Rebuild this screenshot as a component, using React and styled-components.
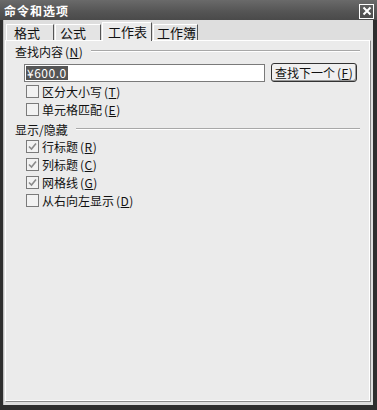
import React from 'react';
import styled, { createGlobalStyle } from 'styled-components';

const Global = createGlobalStyle`
  html, body {
    margin: 0;
    padding: 0;
    background: #2e2e2e;
  }
  body {
    font-family: "Noto Sans CJK SC", "DejaVu Sans", sans-serif;
  }
`;

const findOptions = [
  { label: '区分大小写', key: 'T', checked: false },
  { label: '单元格匹配', key: 'E', checked: false },
];

const viewOptions = [
  { label: '行标题', key: 'R', checked: true },
  { label: '列标题', key: 'C', checked: true },
  { label: '网格线', key: 'G', checked: true },
  { label: '从右向左显示', key: 'D', checked: false },
];

const tabs = [
  { name: '格式', width: 48, pad: 7 },
  { name: '公式', width: 46, pad: 4 },
  { name: '工作表', width: 50, pad: 5 },
  { name: '工作簿', width: 45, pad: 3 },
];

function Mnemonic({ k }) {
  return (
    <Key>
      (<u>{k}</u>)
    </Key>
  );
}

function Check({ label, k, checked }) {
  return (
    <CheckRow>
      <Box>
        {checked && (
          <svg width="9" height="9" viewBox="0 0 9 9">
            <path d="M1 4.5 L3.5 7 L8 1.5" stroke="#8a8a8a" strokeWidth="1.6" fill="none" />
          </svg>
        )}
      </Box>
      <span>{label}</span>
      <Mnemonic k={k} />
    </CheckRow>
  );
}

export default function App() {
  return (
    <>
      <Global />
      <Window>
        <TitleBar>
          <Title>命令和选项</Title>
          <CloseBtn>
            <svg width="10" height="10" viewBox="0 0 10 10">
              <path d="M1.5 1.5 L8.5 8.5 M8.5 1.5 L1.5 8.5" stroke="#fff" strokeWidth="2" />
            </svg>
          </CloseBtn>
        </TitleBar>
        <Body>
          <TabRow>
            {tabs.map((t, i) => (
              <Tab key={t.name} active={i === 2} w={t.width} pad={t.pad}>
                {t.name}
              </Tab>
            ))}
          </TabRow>
          <Panel>
            <GroupHead>
              <span>查找内容</span>
              <Mnemonic k="N" />
              <Rule />
            </GroupHead>
            <FindRow>
              <Input>
                <Selected>¥600.0</Selected>
              </Input>
              <Button>
                查找下一个<Mnemonic k="F" />
              </Button>
            </FindRow>
            {findOptions.map((o) => (
              <Check key={o.label} label={o.label} k={o.key} checked={o.checked} />
            ))}
            <GroupHead second>
              <span>显示/隐藏</span>
              <Rule />
            </GroupHead>
            {viewOptions.map((o) => (
              <Check key={o.label} label={o.label} k={o.key} checked={o.checked} />
            ))}
          </Panel>
        </Body>
      </Window>
    </>
  );
}

const Window = styled.div`
  width: 377px;
  height: 410px;
  box-sizing: border-box;
  background: #2e2e2e;
  padding: 0 4px 5px 3px;
  display: flex;
  flex-direction: column;
`;

const TitleBar = styled.div`
  height: 20px;
  margin: 0 -4px 0 -3px;
  padding: 0 3px 0 4px;
  display: flex;
  align-items: center;
  justify-content: space-between;
  background: linear-gradient(to bottom, #6a6a6a, #545454 60%, #4a4a4a);
`;

const Title = styled.span`
  color: #fff;
  font-size: 12px;
  font-weight: bold;
  letter-spacing: 1px;
`;

const CloseBtn = styled.div`
  width: 13px;
  height: 13px;
  border: 1px solid #fff;
  display: flex;
  align-items: center;
  justify-content: center;
  margin-top: 2px;
`;

const Body = styled.div`
  flex: 1;
  background: #dedede;
  display: flex;
  flex-direction: column;
  padding: 1px 2px 3px 1px;
  border-left: 1px solid #bdbdbd;
`;

const TabRow = styled.div`
  display: flex;
  align-items: flex-end;
  height: 19px;
  padding-left: 1px;
`;

const Tab = styled.div`
  box-sizing: border-box;
  width: ${(p) => p.w}px;
  height: ${(p) => (p.active ? '19px' : '16px')};
  padding-left: ${(p) => p.pad}px;
  background: ${(p) => (p.active ? '#ebebeb' : '#e4e4e4')};
  border-top: 1px solid #fff;
  border-left: 1px solid #fff;
  border-right: 1px solid #555;
  margin-right: 1px;
  font-size: 13px;
  line-height: ${(p) => (p.active ? '18px' : '15px')};
  color: #111;
  position: relative;
  z-index: ${(p) => (p.active ? 1 : 0)};
  margin-bottom: ${(p) => (p.active ? '-1px' : '0')};
`;

const Panel = styled.div`
  flex: 1;
  background: #ebebeb;
  border-top: 1px solid #fff;
  border-left: 1px solid #fff;
  border-right: 1px solid #8a8a8a;
  border-bottom: 1px solid #8a8a8a;
  box-shadow: inset -1px -1px 0 #fff;
  padding: 1px 10px 0 9px;
  display: flex;
  flex-direction: column;
  font-size: 12px;
  color: #111;
`;

const GroupHead = styled.div`
  display: flex;
  align-items: center;
  height: ${(p) => (p.second ? '16px' : '18px')};
  margin-top: ${(p) => (p.second ? '3px' : '0')};
  font-size: 12px;
`;

const Rule = styled.div`
  flex: 1;
  height: 0;
  border-top: 1px solid #a8a8a8;
  border-bottom: 1px solid #fff;
  margin-left: 8px;
`;

const Key = styled.span`
  font-size: 12px;
  margin-left: 2px;
  letter-spacing: 0.5px;
`;

const FindRow = styled.div`
  display: flex;
  align-items: center;
  gap: 6px;
  padding-left: 9px;
  margin: 3px 0 0;
`;

const Input = styled.div`
  width: 238px;
  height: 16px;
  background: #fff;
  border: 1px solid #7a7a7a;
  display: flex;
  align-items: center;
  padding-left: 1px;
`;

const Selected = styled.span`
  background: #555;
  color: #fff;
  font-size: 12px;
  line-height: 14px;
  padding: 0 1px;
  letter-spacing: 0.5px;
`;

const Button = styled.div`
  height: 17px;
  padding: 0 3px;
  border: 1px solid #333;
  border-radius: 3px;
  background: #f0f0f0;
  box-shadow: inset -1px -1px 0 #999;
  display: flex;
  align-items: center;
  font-size: 12px;
`;

const CheckRow = styled.div`
  display: flex;
  align-items: center;
  height: 18px;
  padding-left: 11px;
  font-size: 12px;
`;

const Box = styled.div`
  width: 11px;
  height: 11px;
  border: 1px solid #7a7a7a;
  background: #f2f2f2;
  margin-right: 3px;
  display: flex;
  align-items: center;
  justify-content: center;
`;
